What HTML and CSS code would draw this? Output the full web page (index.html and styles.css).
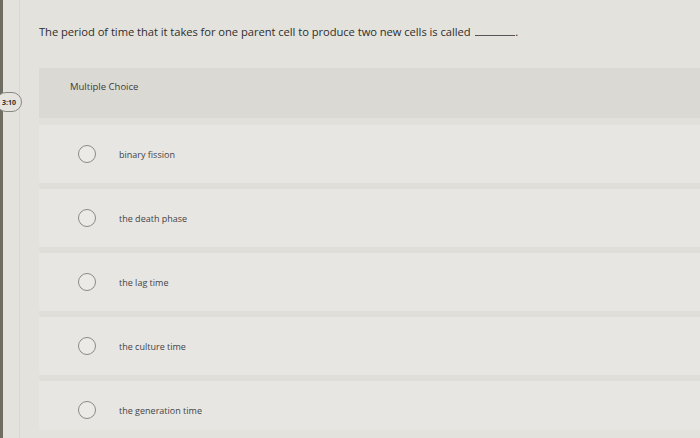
FILE: index.html
```html
<!DOCTYPE html>
<html lang="en">
  <head>
    <meta charset="UTF-8" />
    <title>Question</title>
    <link rel="stylesheet" href="styles.css">
  </head>
  <body>
    <div class="page">
      <div class="edge"></div>
      <div class="rail">
        <div class="timer">3:10</div>
      </div>
      <div class="main">
        <p class="question">
          The period of time that it takes for one parent cell to produce two new cells is called <span class="blank"></span>.
        </p>

        <div class="panel">
          <div class="panel-head">Multiple Choice</div>
          <ul class="options">
            <li class="option"><span class="radio"></span><span class="label">binary fission</span></li>
            <li class="option"><span class="radio"></span><span class="label">the death phase</span></li>
            <li class="option"><span class="radio"></span><span class="label">the lag time</span></li>
            <li class="option"><span class="radio"></span><span class="label">the culture time</span></li>
            <li class="option"><span class="radio"></span><span class="label">the generation time</span></li>
          </ul>
        </div>
      </div>
    </div>
  </body>
</html>
```

FILE: styles.css
```css
* {
  margin: 0;
  padding: 0;
  box-sizing: border-box;
}

body {
  font-family: "Open Sans", "Liberation Sans", sans-serif;
  background-color: #e4e2dd;
  color: #3a3a3a;
  width: 700px;
  height: 438px;
  overflow: hidden;
}

.page {
  display: flex;
  height: 438px;
}

.edge {
  width: 3px;
  background-color: #6f6c64;
}

.rail {
  position: relative;
  width: 17px;
  border-right: 1px solid #d8d6d0;
}

.timer {
  position: absolute;
  top: 92px;
  right: -3px;
  width: 26px;
  height: 20px;
  border: 1px solid #8a8883;
  border-radius: 10px;
  background-color: #e6e4df;
  font-size: 7px;
  font-weight: 700;
  color: #333;
  display: flex;
  align-items: center;
  justify-content: flex-end;
  padding-right: 5px;
}

.main {
  flex: 1;
  padding-left: 19px;
  display: flex;
  flex-direction: column;
}

.question {
  flex-shrink: 0;
  font-size: 11.2px;
  color: #2e2e2e;
  margin-top: 24px;
  height: 44px;
  letter-spacing: -0.05px;
}

.blank {
  display: inline-block;
  width: 40px;
  border-bottom: 1px solid #555;
  margin-left: 2px;
}

.panel {
  flex: 1;
  min-height: 0;
  overflow: hidden;
  margin-bottom: 8px;
  background-color: #e2e0db;
}

.panel-head {
  height: 50px;
  padding: 12px 0 0 31px;
  font-size: 9.5px;
  color: #3d3d3d;
  background-color: #dbd9d4;
}

.options {
  list-style: none;
  padding-top: 7px;
}

.option {
  display: flex;
  align-items: center;
  height: 64px;
  padding-left: 39px;
  background-color: #e7e6e2;
  border-bottom: 6px solid #e0ded9;
}

.radio {
  width: 18px;
  height: 18px;
  border: 1px solid #8b8a86;
  border-radius: 50%;
  background-color: #eceae6;
}

.label {
  margin-left: 23px;
  font-size: 9px;
  color: #444;
}
```
